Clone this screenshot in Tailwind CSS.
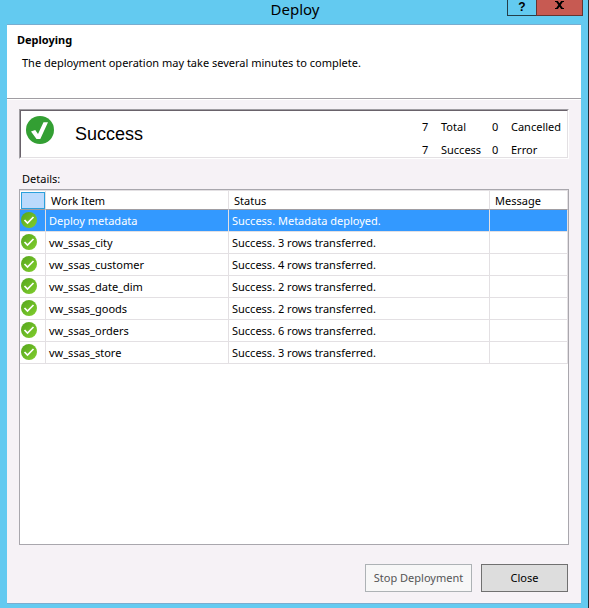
<!DOCTYPE html>
<html lang="en">
<head>
<meta charset="utf-8">
<meta name="viewport" content="width=device-width, initial-scale=1">
<title>Deploy</title>
<script src="https://cdn.jsdelivr.net/npm/@tailwindcss/browser@4"></script>
</head>
<body class="flex min-h-screen flex-col border-r border-[#20303a] bg-[#63caf0] px-[7px] pb-1 font-['Noto_Sans',sans-serif] text-[11px] leading-4 text-black">
<svg class="absolute size-0" aria-hidden="true">
  <defs>
    <linearGradient id="green" x1="0" y1="0" x2="1" y2="1"><stop offset="0" stop-color="#55a51c"/><stop offset="1" stop-color="#82cf2e"/></linearGradient>
    <symbol id="ok" viewBox="0 0 16 16"><circle cx="8" cy="8" r="8" fill="url(#green)"/><path d="M3.5 8l3 3 6-6" fill="none" stroke="#fff" stroke-width="1.7"/></symbol>
  </defs>
</svg>
<header class="-mr-[2px] grid h-6 shrink-0 grid-cols-[1fr_auto_1fr]">
  <h1 class="col-start-2 pt-px text-[15px] leading-4">Deploy</h1>
  <div class="flex h-4 justify-end">
    <button aria-label="Help" class="flex w-[29px] items-start justify-center border-b-1 border-l-1 border-[#243e49] font-['Liberation_Sans',sans-serif] text-[12px] leading-[14px] font-bold">?</button>
    <button aria-label="Close window" class="flex w-[47px] items-start justify-center border-r-1 border-b-1 border-l-1 border-[#643532] bg-[#c75a52] pt-px"><svg class="h-2 w-[9px]" viewBox="0 0 9 8" fill="none" stroke="#000"><path d="M2 .5l5 7M7 .5l-5 7" stroke-width="2"/><path d="M0 .5h3M6 .5h3M0 7.5h3M6 7.5h3"/></svg></button>
  </div>
</header>
<main class="flex grow flex-col border-y border-[#78add0] bg-[#f6f2f6]">
  <section class="h-[74px] shrink-0 border-b border-[#a09da2] bg-white px-[10px] pt-[7px]">
    <h2 class="font-bold">Deploying</h2>
    <p class="mt-[7px] pl-[5px]">The deployment operation may take several minutes to complete.</p>
  </section>
  <div class="flex grow flex-col border-t border-white px-3 pt-[9px] pb-[11px]">
    <section class="border-t border-l border-[#a09da2] border-r border-b border-r-white border-b-white">
      <div class="flex h-12 border-t border-l border-[#69626a] border-r border-b border-r-[#e3e0e3] border-b-[#e3e0e3] bg-white pr-1 pl-[5px]">
        <svg class="mt-[5px] size-7" viewBox="0 0 28 28" role="img" aria-label="Success"><circle cx="14" cy="14" r="14" fill="#339f33"/><path d="M5 15.5l4.2-1.5 2.8 4L17.5 6.3H22L14.3 23h-3.8z" fill="#fff"/></svg>
        <p class="ml-[21px] self-center font-['Liberation_Sans',sans-serif] text-lg leading-6">Success</p>
        <dl class="ml-auto grid grid-cols-[19px_51px_19px_52px] content-start gap-y-[7px] pt-2">
          <dd>7</dd><dt>Total</dt><dd>0</dd><dt>Cancelled</dt>
          <dd>7</dd><dt>Success</dt><dd>0</dd><dt>Error</dt>
        </dl>
      </div>
    </section>
    <h3 id="details" class="mt-3 mb-[2px] pl-[3px]">Details:</h3>
    <div class="grow border border-[#a9a7ad] bg-white">
      <table aria-labelledby="details" class="w-full table-fixed border-separate border-spacing-0 text-left">
        <colgroup><col class="w-[26px]"><col class="w-[183px]"><col class="w-[261px]"><col></colgroup>
        <thead>
          <tr class="h-5 [&>th]:border-y [&>th]:border-r [&>th]:border-t-[#e3e0e3] [&>th]:border-r-[#e3e0e3] [&>th]:border-b-[#a09da2] [&>th]:pt-px [&>th]:font-normal">
            <th class="pl-px" aria-label="State"><span class="block h-[17px] border border-[#2ba0dc] bg-[#bbdafd]"></span></th><th class="pl-[5px]">Work Item</th><th class="pl-[5px]">Status</th><th class="pl-[5px]">Message</th>
          </tr>
        </thead>
        <tbody class="[&>tr]:h-[22px] [&_td]:border-r [&_td]:border-b [&_td]:border-[#e3e0e3] [&_td]:pl-[3px] [&_td:first-child]:pb-[2px] [&_td:first-child]:pl-px [&_svg]:size-4">
          <tr class="bg-[#3399ff] text-white"><td><svg role="img" aria-label="Done"><use href="#ok"/></svg></td><td>Deploy metadata</td><td>Success. Metadata deployed.</td><td></td></tr>
          <tr><td><svg role="img" aria-label="Done"><use href="#ok"/></svg></td><td>vw_ssas_city</td><td>Success. 3 rows transferred.</td><td></td></tr>
          <tr><td><svg role="img" aria-label="Done"><use href="#ok"/></svg></td><td>vw_ssas_customer</td><td>Success. 4 rows transferred.</td><td></td></tr>
          <tr><td><svg role="img" aria-label="Done"><use href="#ok"/></svg></td><td>vw_ssas_date_dim</td><td>Success. 2 rows transferred.</td><td></td></tr>
          <tr><td><svg role="img" aria-label="Done"><use href="#ok"/></svg></td><td>vw_ssas_goods</td><td>Success. 2 rows transferred.</td><td></td></tr>
          <tr><td><svg role="img" aria-label="Done"><use href="#ok"/></svg></td><td>vw_ssas_orders</td><td>Success. 6 rows transferred.</td><td></td></tr>
          <tr><td><svg role="img" aria-label="Done"><use href="#ok"/></svg></td><td>vw_ssas_store</td><td>Success. 3 rows transferred.</td><td></td></tr>
        </tbody>
      </table>
    </div>
    <footer class="mt-[19px] flex justify-end gap-[9px] pr-px">
      <button disabled class="h-7 w-[107px] border border-[#adb2b5] bg-[#f7f7f7] text-[#555]">Stop Deployment</button>
      <button class="h-7 w-[87px] border border-[#707070] bg-[#dddddd]">Close</button>
    </footer>
  </div>
</main>
</body>
</html>
